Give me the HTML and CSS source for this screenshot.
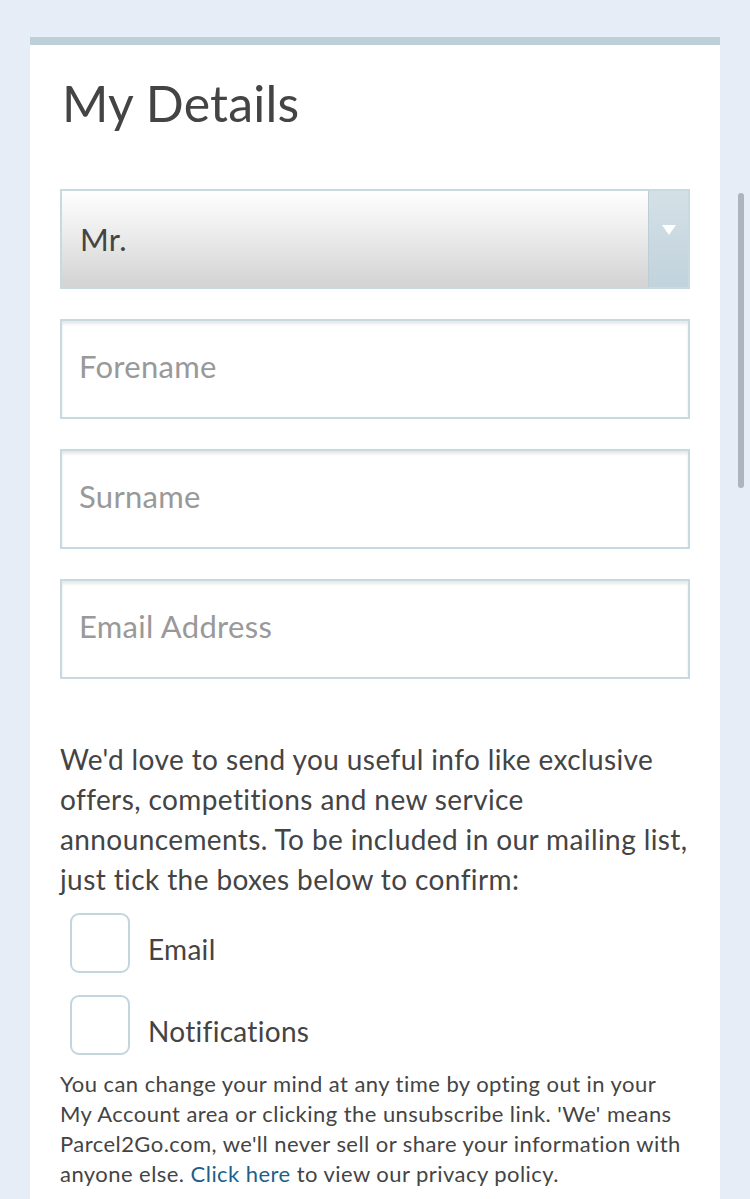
FILE: index.html
```html
<html>
<head>
    <title>My Details</title>
    <link rel="stylesheet" href="styles.css">
</head>
<body>
    <div class="card">
        <h1>My Details</h1>

        <div class="select">
            <span class="select-value">Mr.</span>
            <span class="select-arrow">
                <svg width="14" height="10" viewBox="0 0 14 10"><polygon points="0,0 14,0 7,10" fill="#fff"/></svg>
            </span>
        </div>

        <input class="field" type="text" placeholder="Forename">
        <input class="field" type="text" placeholder="Surname">
        <input class="field" type="text" placeholder="Email Address">

        <p class="intro">We'd love to send you useful info like exclusive offers, competitions and new service announcements. To be included in our mailing list, just tick the boxes below to confirm:</p>

        <label class="check"><span class="box"></span><span class="check-text">Email</span></label>
        <label class="check"><span class="box"></span><span class="check-text">Notifications</span></label>

        <p class="small">You can change your mind at any time by opting out in your My Account area or clicking the unsubscribe link. 'We' means Parcel2Go.com, we'll never sell or share your information with anyone else. <a href="#">Click here</a> to view our privacy policy.</p>
    </div>

    <div class="scrollbar"></div>
</body>
</html>
```

FILE: styles.css
```css
body {
    margin: 0;
    padding: 37px 30px 0;
    background: #e6edf7;
    font-family: Lato, "Noto Sans", sans-serif;
    color: #444;
    overflow: hidden;
}

.card {
    background: #fff;
    border-top: 8px solid #bdd0da;
    padding: 29px 30px 40px;
}

h1 {
    font-weight: normal;
    font-size: 50px;
    line-height: 58px;
    letter-spacing: 0.2px;
    margin: 0 0 57px;
    padding-left: 2px;
}

.select {
    display: flex;
    height: 100px;
    box-sizing: border-box;
    border: 2px solid #c9d9e1;
    background: linear-gradient(#fff, #d3d3d3);
}

.select-value {
    flex: 1;
    display: flex;
    align-items: center;
    padding-left: 18px;
    font-size: 31px;
    letter-spacing: 0.3px;
    color: #444;
}

.select-arrow {
    width: 40px;
    display: flex;
    justify-content: center;
    padding-top: 34px;
    box-sizing: border-box;
    border-left: 1px solid #bccdd6;
    background: linear-gradient(#d4e0e6, #c1d3dc);
}

.field {
    display: block;
    width: 100%;
    height: 100px;
    box-sizing: border-box;
    margin-top: 30px;
    padding: 0 17px 6px;
    border: 2px solid #c9d9e1;
    box-shadow: inset 0 3px 3px rgba(0, 0, 0, 0.09);
    font-family: inherit;
    font-size: 31px;
    letter-spacing: 0.3px;
    color: #444;
    outline: none;
}

.field::placeholder {
    color: #999;
}

.intro {
    font-size: 28px;
    line-height: 40px;
    letter-spacing: 0.4px;
    margin: 60px 0 14px;
}

.check {
    display: flex;
    align-items: center;
    gap: 18px;
    font-size: 28px;
    letter-spacing: 0.3px;
    margin-left: 10px;
    margin-bottom: 22px;
}

.check-text {
    padding-top: 12px;
}

.box {
    width: 60px;
    height: 60px;
    box-sizing: border-box;
    border: 2px solid #c4d5de;
    border-radius: 9px;
}

.small {
    font-size: 22px;
    line-height: 30px;
    letter-spacing: 0.45px;
    margin: -8px 0 0;
}

.small a {
    color: #1d5f8a;
    text-decoration: none;
}

.scrollbar {
    position: fixed;
    top: 193px;
    right: 6px;
    width: 6px;
    height: 295px;
    border-radius: 3px;
    background: #aeb3bd;
}
```
